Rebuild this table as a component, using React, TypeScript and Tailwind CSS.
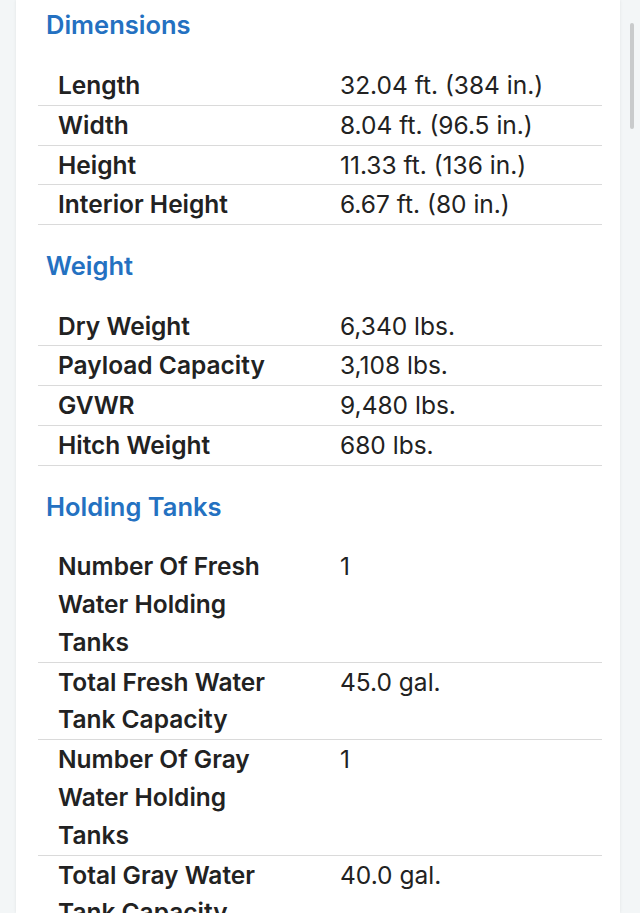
import React from 'react';

type Row = { label: string; value: string };

const sections: { title: string; rows: Row[] }[] = [
  {
    title: 'Dimensions',
    rows: [
      { label: 'Length', value: '32.04 ft. (384 in.)' },
      { label: 'Width', value: '8.04 ft. (96.5 in.)' },
      { label: 'Height', value: '11.33 ft. (136 in.)' },
      { label: 'Interior Height', value: '6.67 ft. (80 in.)' },
    ],
  },
  {
    title: 'Weight',
    rows: [
      { label: 'Dry Weight', value: '6,340 lbs.' },
      { label: 'Payload Capacity', value: '3,108 lbs.' },
      { label: 'GVWR', value: '9,480 lbs.' },
      { label: 'Hitch Weight', value: '680 lbs.' },
    ],
  },
  {
    title: 'Holding Tanks',
    rows: [
      { label: 'Number Of Fresh Water Holding Tanks', value: '1' },
      { label: 'Total Fresh Water Tank Capacity', value: '45.0 gal.' },
      { label: 'Number Of Gray Water Holding Tanks', value: '1' },
      { label: 'Total Gray Water Tank Capacity', value: '40.0 gal.' },
    ],
  },
];

const SpecTable: React.FC<{ rows: Row[] }> = ({ rows }) => (
  <div className="ml-[22px] mr-[2px]">
    {rows.map((r) => (
      <div key={r.label} className="flex pt-px border-b border-[#dadada] leading-[37.8px] text-[24.5px] text-[#222]">
        <div className="w-[282px] shrink-0 pl-5 pr-[38px] font-semibold">{r.label}</div>
        <div className="flex-1 pl-5">{r.value}</div>
      </div>
    ))}
  </div>
);

export default function App() {
  return (
    <div className="h-[913px] overflow-hidden bg-[#f3f6f7] flex" style={{ fontFamily: 'Inter, "Liberation Sans", sans-serif' }}>
      <div className="ml-4 w-[604px] bg-white shadow-[0_0_3px_rgba(0,0,0,0.08)] pr-[16px]">
        <div className="-mt-[15.6px]">
          {sections.map((s) => (
            <div key={s.title}>
              <h2 className="pt-[21px] pb-[20.5px] pl-[30px] leading-[40px] text-[25.5px] font-semibold text-[#2471c1]">
                {s.title}
              </h2>
              <SpecTable rows={s.rows} />
            </div>
          ))}
        </div>
      </div>
      <div className="flex-1 relative">
        <div className="absolute left-[10px] top-[23px] w-[4px] h-[106px] rounded-full bg-[#c9cbcc]" />
      </div>
    </div>
  );
}
